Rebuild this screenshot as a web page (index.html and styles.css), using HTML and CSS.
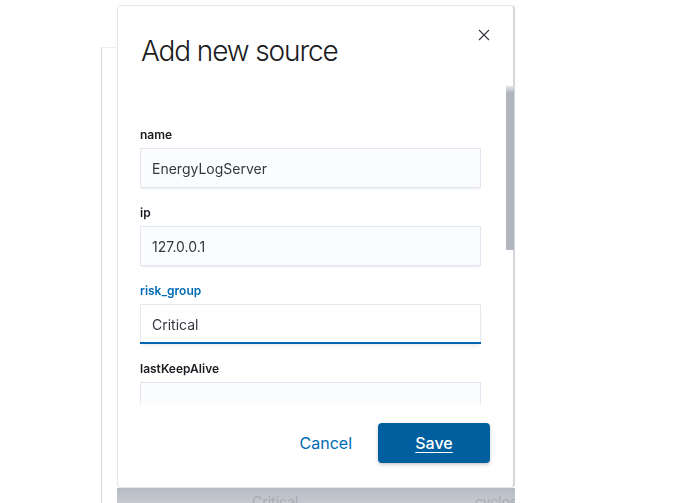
FILE: index.html
```html
<!DOCTYPE html>
<html>
<head>
<meta charset="utf-8">
<link rel="stylesheet" href="styles.css">
</head>
<body>
<div class="page">
  <div class="panel"></div>
</div>
<div class="modal-layer">
  <div class="modal">
    <button class="close" aria-label="Close">
      <svg width="16" height="16" viewBox="0 0 16 16"><path d="M3 3 L13 13 M13 3 L3 13" stroke="#343741" stroke-width="1.1" fill="none"/></svg>
    </button>
    <div class="header"><h1 class="title">Add new source</h1></div>
    <div class="body">
      <form class="form">
        <div class="row"><label class="label">name</label><div class="input">EnergyLogServer</div></div>
        <div class="row"><label class="label">ip</label><div class="input">127.0.0.1</div></div>
        <div class="row"><label class="label focus">risk_group</label><div class="input focused">Critical</div></div>
        <div class="row"><label class="label">lastKeepAlive</label><div class="input"></div></div>
        <div class="row"><label class="label">os</label><div class="input"></div></div>
      </form>
    </div>
    <div class="scroll-thumb"></div>
    <div class="footer">
      <button class="btn-empty">Cancel</button>
      <button class="btn-fill">Save</button>
    </div>
  </div>
  <div class="strip"><span>Critical</span><span>cyclos</span></div>
</div>
</body>
</html>
```
FILE: styles.css
```css
html, body {
  margin: 0;
  padding: 0;
  background: #fff;
  overflow: hidden;
  height: 100%;
}
body {
  font-family: Inter, "Noto Sans", sans-serif;
  color: #343741;
}
.page {
  padding: 47px 0 0 101px;
  height: 100%;
  box-sizing: border-box;
}
.panel {
  width: 400px;
  height: 100%;
  border-left: 1px solid #d3d6dc;
  border-top: 1px solid #eceef1;
}
.modal-layer {
  position: absolute;
  left: 117px;
  top: 5px;
  width: 398px;
  display: flex;
  flex-direction: column;
}
.modal {
  position: relative;
  height: 483px;
  box-sizing: border-box;
  background: #fff;
  border: 1px solid #e4e7ec;
  border-right: 2px solid #d3d6db;
  border-radius: 4px;
  display: flex;
  flex-direction: column;
}
.close {
  position: absolute;
  top: 17px;
  right: 17px;
  width: 24px;
  height: 24px;
  padding: 0;
  border: 0;
  background: transparent;
  display: flex;
  align-items: center;
  justify-content: center;
}
.header {
  padding: 27px 40px 16px 23px;
}
.title {
  margin: 0;
  font-size: 28px;
  line-height: 36px;
  font-weight: 300;
  letter-spacing: -0.04em;
  color: #1a1c21;
}
.body {
  height: 322px;
  overflow: hidden;
  -webkit-mask-image: linear-gradient(to bottom, rgba(255,0,0,0.1) 0, red 7.5px, red calc(100% - 7.5px), rgba(255,0,0,0.1) 100%);
  mask-image: linear-gradient(to bottom, rgba(255,0,0,0.1) 0, red 7.5px, red calc(100% - 7.5px), rgba(255,0,0,0.1) 100%);
}
.scroll-thumb {
  position: absolute;
  left: 388px;
  top: 80px;
  width: 8px;
  height: 164px;
  background: linear-gradient(to bottom, #e4e6ea 0, #b1b5be 7px, #b1b5be 100%);
}
.form {
  padding: 41px 32px 24px 22px;
  display: flex;
  flex-direction: column;
  gap: 16px;
}
.row {
  display: flex;
  flex-direction: column;
  gap: 4px;
}
.label {
  font-size: 12px;
  line-height: 18px;
  font-weight: 600;
  color: #1a1c21;
}
.label.focus {
  color: #006bb4;
}
.input {
  height: 40px;
  box-sizing: border-box;
  padding: 0 12px;
  display: flex;
  align-items: center;
  font-size: 14px;
  color: #343741;
  background: #fbfcfd;
  box-shadow: 0 1px 1px -1px rgba(152,162,179,0.2), 0 3px 2px -2px rgba(152,162,179,0.2), inset 0 0 0 1px rgba(15,39,118,0.1);
}
.input.focused {
  background: #fff linear-gradient(to top, #006bb4 2px, transparent 2px);
  box-shadow: 0 1px 1px -1px rgba(152,162,179,0.2), 0 4px 4px -2px rgba(152,162,179,0.2), inset 0 0 0 1px rgba(15,39,118,0.1);
}
.footer {
  padding: 16px 23px 24px 24px;
  display: flex;
  justify-content: flex-end;
  align-items: center;
  gap: 14px;
}
.btn-empty {
  height: 40px;
  padding: 0 12px;
  border: 0;
  background: transparent;
  font-family: inherit;
  font-size: 16px;
  color: #006bb4;
}
.btn-fill {
  width: 112px;
  height: 40px;
  border: 0;
  border-radius: 4px;
  background: #005f9f;
  color: #fff;
  font-family: inherit;
  font-size: 16px;
  font-weight: 500;
  text-decoration: underline;
  text-underline-offset: 3px;
  box-shadow: 0 2px 4px rgba(0,0,0,0.15), 0 1px 2px rgba(0,0,0,0.1);
}
.strip {
  height: 30px;
  background: linear-gradient(to bottom, #b7bbc3, #d4d6db);
  padding: 5px 0 0 135px;
  box-sizing: border-box;
  display: grid;
  grid-template-columns: 223px auto;
  font-size: 14px;
  line-height: 18px;
  color: #a7abb3;
  overflow: hidden;
}
```
